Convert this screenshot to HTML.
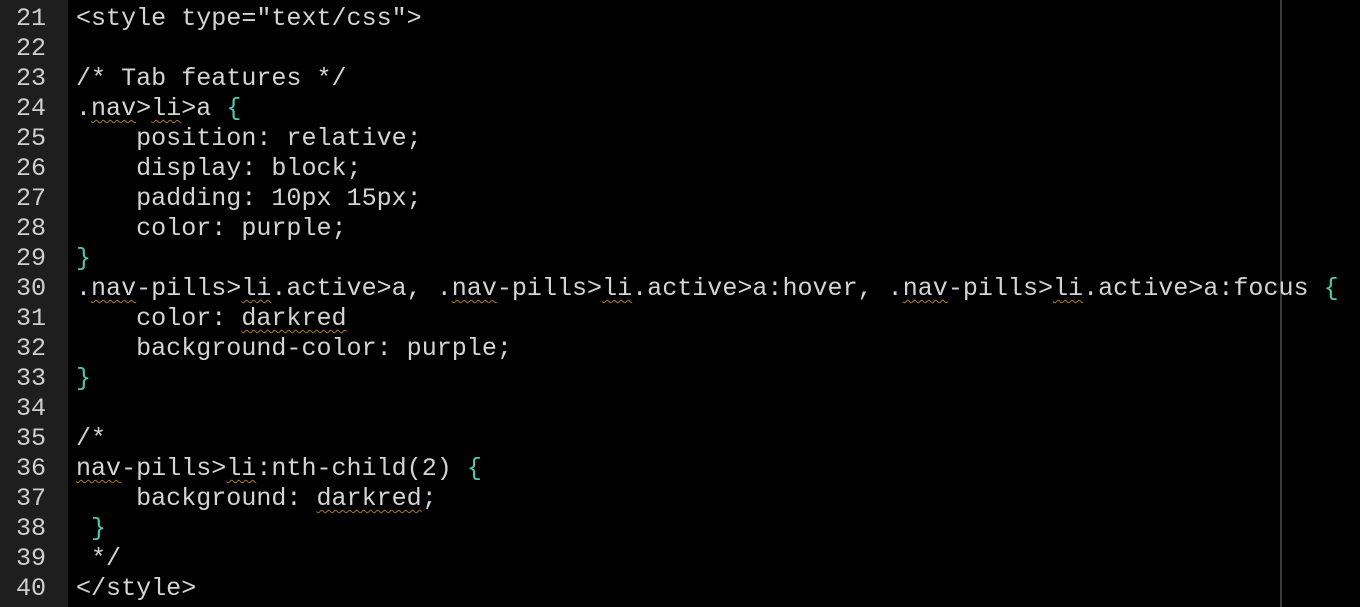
<!DOCTYPE html>
<html><head><meta charset="utf-8"><style>
html,body{margin:0;padding:0;background:#000;width:1360px;height:607px;overflow:hidden}
.g{position:absolute;left:0;top:0;width:68px;height:607px;background:#1e1e1e}
.vl{position:absolute;left:1280px;top:0;width:2px;height:607px;background:#3a3a3a}
.l{position:absolute;left:0;height:30px;line-height:30px;font-family:"Liberation Mono",monospace;font-size:25.05px;color:#d4d4d4;white-space:pre}
.n{position:absolute;left:0;width:46px;text-align:right;color:#cfcfcf}
.t{position:absolute;left:76px}
.b{color:#4ec9b0}
.w{text-decoration:underline wavy #a77a22;text-decoration-thickness:1px;text-underline-offset:4px}
</style></head><body>
<div class="g"></div><div class="vl"></div>
<div class="l" style="top:4px"><span class="n">21</span><span class="t">&lt;style type="text/css"&gt;</span></div>
<div class="l" style="top:34px"><span class="n">22</span></div>
<div class="l" style="top:64px"><span class="n">23</span><span class="t">/* Tab features */</span></div>
<div class="l" style="top:94px"><span class="n">24</span><span class="t">.<span class="w">nav</span>&gt;<span class="w">li</span>&gt;a <span class="b">{</span></span></div>
<div class="l" style="top:124px"><span class="n">25</span><span class="t">    position: relative;</span></div>
<div class="l" style="top:154px"><span class="n">26</span><span class="t">    display: block;</span></div>
<div class="l" style="top:184px"><span class="n">27</span><span class="t">    padding: 10px 15px;</span></div>
<div class="l" style="top:214px"><span class="n">28</span><span class="t">    color: purple;</span></div>
<div class="l" style="top:244px"><span class="n">29</span><span class="t"><span class="b">}</span></span></div>
<div class="l" style="top:274px"><span class="n">30</span><span class="t">.<span class="w">nav</span>-pills&gt;<span class="w">li</span>.active&gt;a, .<span class="w">nav</span>-pills&gt;<span class="w">li</span>.active&gt;a:hover, .<span class="w">nav</span>-pills&gt;<span class="w">li</span>.active&gt;a:focus <span class="b">{</span></span></div>
<div class="l" style="top:304px"><span class="n">31</span><span class="t">    color: <span class="w">darkred</span></span></div>
<div class="l" style="top:334px"><span class="n">32</span><span class="t">    background-color: purple;</span></div>
<div class="l" style="top:364px"><span class="n">33</span><span class="t"><span class="b">}</span></span></div>
<div class="l" style="top:394px"><span class="n">34</span></div>
<div class="l" style="top:424px"><span class="n">35</span><span class="t">/*</span></div>
<div class="l" style="top:454px"><span class="n">36</span><span class="t"><span class="w">nav</span>-pills&gt;<span class="w">li</span>:nth-child(2) <span class="b">{</span></span></div>
<div class="l" style="top:484px"><span class="n">37</span><span class="t">    background: <span class="w">darkred</span>;</span></div>
<div class="l" style="top:514px"><span class="n">38</span><span class="t"> <span class="b">}</span></span></div>
<div class="l" style="top:544px"><span class="n">39</span><span class="t"> */</span></div>
<div class="l" style="top:574px"><span class="n">40</span><span class="t">&lt;/style&gt;</span></div>
</body></html>
